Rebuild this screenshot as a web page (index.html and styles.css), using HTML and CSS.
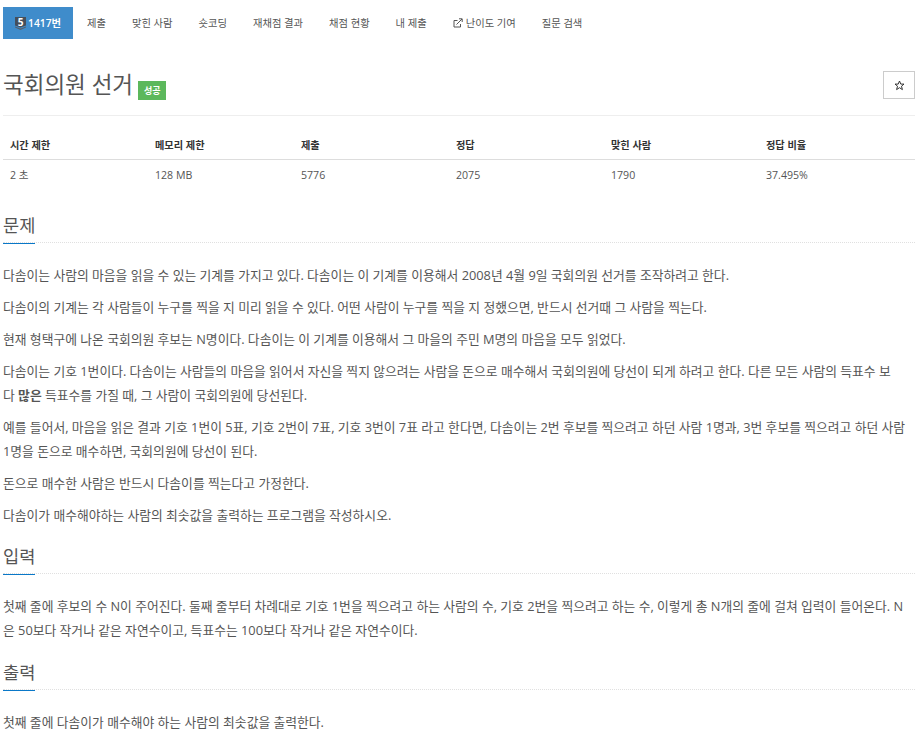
FILE: index.html
```html
<!DOCTYPE html>
<html lang="ko">
<head>
    <meta charset="UTF-8">
    <meta name="viewport" content="width=device-width, initial-scale=1.0">
    <title>국회의원 선거</title>
    <link rel="stylesheet" href="styles.css">
</head>
<body>
    <div class="container">

        <!-- 문제 메뉴 -->
        <ul class="problem-menu">
            <li class="active">
                <a href="#">
                    <svg class="tier-icon" width="11" height="13" viewBox="0 0 11 13">
                        <path d="M0 0H11V8.5L5.5 10.5L0 8.5Z" fill="#454f5b"/>
                        <path d="M0 9.5L5.5 11.5L11 9.5V10.5L5.5 13L0 10.5Z" fill="#56616d"/>
                    </svg><span class="tier-num">5</span>1417번
                </a>
            </li>
            <li><a href="#">제출</a></li>
            <li><a href="#">맞힌 사람</a></li>
            <li><a href="#">숏코딩</a></li>
            <li><a href="#">재채점 결과</a></li>
            <li><a href="#">채점 현황</a></li>
            <li><a href="#">내 제출</a></li>
            <li>
                <a href="#">
                    <svg class="ext-icon" width="10" height="10" viewBox="0 0 10 10" fill="none" stroke="#555" stroke-width="1">
                        <path d="M7.5 6V9H1V2.5H4.5"/>
                        <path d="M3.5 6.5L9 1M6 0.8H9.2V4"/>
                    </svg>난이도 기여
                </a>
            </li>
            <li><a href="#">질문 검색</a></li>
        </ul>

        <!-- 제목 -->
        <div class="page-header">
            <h1>국회의원 선거 <span class="label-success">성공</span></h1>
            <button class="star-btn">
                <svg width="11" height="11" viewBox="0 0 11 11" fill="none" stroke="#333" stroke-width="1">
                    <path d="M5.5 1L6.8 4.1H10L7.5 6.2L8.4 9.6L5.5 7.7L2.6 9.6L3.5 6.2L1 4.1H4.2Z"/>
                </svg>
            </button>
        </div>

        <!-- 제한 정보 -->
        <table class="problem-info">
            <thead>
                <tr>
                    <th class="col-time">시간 제한</th>
                    <th class="col-memory">메모리 제한</th>
                    <th class="col-submit">제출</th>
                    <th class="col-answer">정답</th>
                    <th class="col-solved">맞힌 사람</th>
                    <th>정답 비율</th>
                </tr>
            </thead>
            <tbody>
                <tr>
                    <td>2 초</td>
                    <td>128 MB</td>
                    <td>5776</td>
                    <td>2075</td>
                    <td>1790</td>
                    <td>37.495%</td>
                </tr>
            </tbody>
        </table>

        <section class="problem-section">
            <div class="headline"><h2>문제</h2></div>
            <p>다솜이는 사람의 마음을 읽을 수 있는 기계를 가지고 있다. 다솜이는 이 기계를 이용해서 2008년 4월 9일 국회의원 선거를 조작하려고 한다.</p>
            <p>다솜이의 기계는 각 사람들이 누구를 찍을 지 미리 읽을 수 있다. 어떤 사람이 누구를 찍을 지 정했으면, 반드시 선거때 그 사람을 찍는다.</p>
            <p>현재 형택구에 나온 국회의원 후보는 N명이다. 다솜이는 이 기계를 이용해서 그 마을의 주민 M명의 마음을 모두 읽었다.</p>
            <p>다솜이는 기호 1번이다. 다솜이는 사람들의 마음을 읽어서 자신을 찍지 않으려는 사람을 돈으로 매수해서 국회의원에 당선이 되게 하려고 한다. 다른 모든 사람의 득표수 보<br>다 <b>많은</b> 득표수를 가질 때, 그 사람이 국회의원에 당선된다.</p>
            <p>예를 들어서, 마음을 읽은 결과 기호 1번이 5표, 기호 2번이 7표, 기호 3번이 7표 라고 한다면, 다솜이는 2번 후보를 찍으려고 하던 사람 1명과, 3번 후보를 찍으려고 하던 사람 1명을 돈으로 매수하면, 국회의원에 당선이 된다.</p>
            <p>돈으로 매수한 사람은 반드시 다솜이를 찍는다고 가정한다.</p>
            <p>다솜이가 매수해야하는 사람의 최솟값을 출력하는 프로그램을 작성하시오.</p>
        </section>

        <section class="problem-section section-input">
            <div class="headline"><h2>입력</h2></div>
            <p>첫째 줄에 후보의 수 N이 주어진다. 둘째 줄부터 차례대로 기호 1번을 찍으려고 하는 사람의 수, 기호 2번을 찍으려고 하는 수, 이렇게 총 N개의 줄에 걸쳐 입력이 들어온다. N은 50보다 작거나 같은 자연수이고, 득표수는 100보다 작거나 같은 자연수이다.</p>
        </section>

        <section class="problem-section">
            <div class="headline"><h2>출력</h2></div>
            <p>첫째 줄에 다솜이가 매수해야 하는 사람의 최솟값을 출력한다.</p>
        </section>

    </div>
</body>
</html>
```

FILE: styles.css
```css
/* 기본 */
html, body {
    height: 735px;
    overflow: hidden;
}

body {
    margin: 0;
    font-family: 'Open Sans', 'Noto Sans CJK KR', sans-serif;
    font-size: 12.8px;
    color: #555;
    background-color: #fff;
}

.container {
    width: 912px;
    margin-left: 3px;
}

/* 문제 메뉴 */
.problem-menu {
    display: flex;
    list-style: none;
    margin: 7px 0 0;
    padding: 0;
    height: 32px;
}

.problem-menu a {
    display: block;
    position: relative;
    padding: 0 13px;
    line-height: 32px;
    font-size: 10.3px;
    color: #555;
    text-decoration: none;
    white-space: nowrap;
}

.problem-menu .active {
    margin-right: 1px;
}

.problem-menu .active a {
    background-color: #3f8ccb;
    color: #fff;
    font-weight: 600;
    padding: 0 12px;
}

.tier-icon {
    vertical-align: -3px;
    margin-right: 2px;
}

.tier-num {
    position: absolute;
    left: 12px;
    top: -1px;
    width: 11px;
    text-align: center;
    font-size: 10px;
    font-weight: 700;
    color: #fff;
}

.ext-icon {
    vertical-align: -1px;
    margin-right: 3px;
}

/* 제목 */
.page-header {
    display: flex;
    justify-content: space-between;
    align-items: flex-start;
    margin-top: 32px;
    height: 44px;
    border-bottom: 1px solid #eee;
}

.page-header h1 {
    margin: 0;
    font-size: 22.5px;
    font-weight: 400;
    line-height: 28px;
    color: #555;
}

.label-success {
    display: inline-block;
    vertical-align: -1px;
    margin-left: -1px;
    padding: 0 6px;
    height: 19px;
    line-height: 19px;
    background-color: #5cb85c;
    color: #fff;
    font-size: 9px;
    font-weight: 700;
}

.star-btn {
    width: 32px;
    height: 28px;
    padding: 0;
    border: 1px solid #ccc;
    background-color: #fff;
    line-height: 0;
}

/* 제한 정보 */
.problem-info {
    width: 100%;
    margin: 13px 0 14px;
    border-collapse: collapse;
    font-size: 10.6px;
    color: #555;
}

.problem-info th {
    padding: 0 7px;
    height: 30px;
    text-align: left;
    font-size: 10.2px;
    color: #333;
    font-weight: 600;
    border-bottom: 1px solid #ddd;
}

.problem-info td {
    padding: 0 7px;
    height: 29px;
}

.col-time { width: 131px; }
.col-memory { width: 132px; }
.col-submit { width: 141px; }
.col-answer { width: 141px; }
.col-solved { width: 141px; }

/* 문제 섹션 */
.section-input {
    margin-top: -1px;
}

.problem-section p {
    margin: 0 0 8px;
    max-width: 906px;
    line-height: 24px;
}

.headline {
    height: 39px;
    margin-bottom: 20px;
    border-bottom: 1px dotted #e0e0e0;
}

.headline h2 {
    display: inline-block;
    margin: 0;
    padding: 8px 0 4px;
    line-height: 28px;
    font-size: 17.6px;
    font-weight: 400;
    color: #555;
    border-bottom: 1px solid #0a78c8;
}
```
